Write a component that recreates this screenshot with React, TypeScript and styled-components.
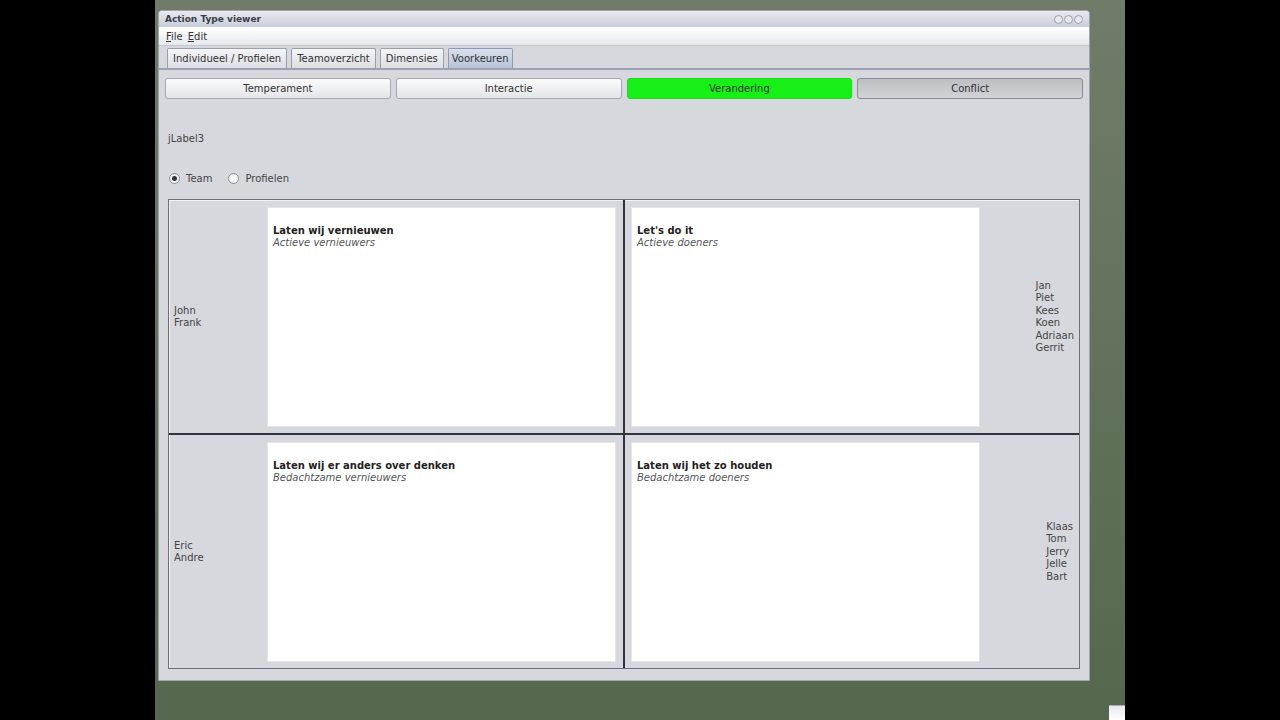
import React from 'react';
import styled, { createGlobalStyle } from 'styled-components';

const GlobalStyle = createGlobalStyle`
  html, body { margin: 0; padding: 0; background: #000; }
  body { font-family: "DejaVu Sans", "Liberation Sans", sans-serif; font-size: 10px; color: #222; }
`;

const Screen = styled.div`
  width: 1280px;
  height: 720px;
  display: flex;
  overflow: hidden;
`;

const SideBar = styled.div`
  width: 155px;
  background: #000;
  flex-shrink: 0;
`;

const Desktop = styled.div`
  width: 970px;
  height: 720px;
  background: linear-gradient(#6f7c69, #55684f);
  padding: 10px 0 0 3px;
  box-sizing: border-box;
  position: relative;
`;

const Window = styled.div`
  width: 932px;
  height: 671px;
  background: #d6d8de;
  border: 1px solid #a0a4ac;
  border-radius: 4px 4px 0 0;
  box-sizing: border-box;
  display: flex;
  flex-direction: column;
`;

const TitleBar = styled.div`
  height: 16px;
  display: flex;
  align-items: center;
  justify-content: space-between;
  padding: 0 6px;
  background: linear-gradient(#e8eaf0, #c9cdd7);
  border-radius: 3px 3px 0 0;
`;

const Title = styled.span`
  font-weight: bold;
  font-size: 9px;
  color: #3a3e48;
`;

const WinButtons = styled.div`
  display: flex;
  gap: 1px;
`;

const WinButton = styled.span`
  width: 7px;
  height: 7px;
  border-radius: 50%;
  border: 1px solid #9ca0aa;
  background: #e6e8ec;
`;

const MenuBar = styled.div`
  height: 18px;
  display: flex;
  align-items: center;
  gap: 5px;
  padding: 0 7px;
  background: linear-gradient(#ffffff, #e6e8ec);
  border-bottom: 1px solid #c4c8d0;
`;

const MenuItem = styled.span`
  color: #333;
  u { text-decoration: underline; }
`;

const TabStrip = styled.div`
  height: 24px;
  display: flex;
  align-items: flex-end;
  gap: 4px;
  padding: 0 8px;
  border-bottom: 2px solid #9aa2b4;
  box-sizing: border-box;
`;

const Tab = styled.div<{ $active?: boolean }>`
  height: 19px;
  padding: 0 ${p => (p.$active ? 3 : 5)}px;
  display: flex;
  align-items: center;
  border: 1px solid ${p => (p.$active ? '#8d9ab0' : '#9a9ea8')};
  border-bottom: none;
  border-radius: 2px 2px 0 0;
  background: ${p => (p.$active ? 'linear-gradient(#d8e0ec, #b7c3d6)' : 'linear-gradient(#f4f5f7, #dcdee3)')};
  color: #333;
`;

const Content = styled.div`
  flex: 1;
  padding: 8px 6px 0 6px;
  display: flex;
  flex-direction: column;
`;

const ButtonRow = styled.div`
  display: grid;
  grid-template-columns: repeat(4, 1fr);
  gap: 5px;
`;

const ToggleButton = styled.div<{ $state?: 'on' | 'pressed' }>`
  height: 19px;
  display: flex;
  align-items: center;
  justify-content: center;
  border-radius: 3px;
  border: 1px solid ${p => (p.$state === 'on' ? '#20d820' : p.$state === 'pressed' ? '#8a8c90' : '#a6a8ae')};
  background: ${p =>
    p.$state === 'on'
      ? '#16f016'
      : p.$state === 'pressed'
      ? 'linear-gradient(#bdbfc3, #d2d3d6)'
      : 'linear-gradient(#fbfbfc, #e4e5e8)'};
  color: #333;
`;

const Label = styled.div`
  margin: 34px 0 0 3px;
  color: #444;
  height: 12px;
`;

const RadioRow = styled.div`
  display: flex;
  align-items: center;
  gap: 16px;
  margin: 28px 0 0 4px;
`;

const Radio = styled.label`
  display: flex;
  align-items: center;
  gap: 6px;
  color: #444;
`;

const RadioDot = styled.span<{ $checked?: boolean }>`
  width: 9px;
  height: 9px;
  border-radius: 50%;
  border: 1px solid #8c9098;
  background: radial-gradient(circle, ${p => (p.$checked ? '#333 0 2px' : '#fff 0 2px')}, #f4f4f6 3px);
`;

const Quadrants = styled.div`
  margin: 15px 3px 0 3px;
  height: 470px;
  border: 1px solid #6c6f78;
  box-shadow: inset 1px 1px 0 #f0f1f4;
  display: grid;
  grid-template-columns: 1fr 2px 1fr;
  grid-template-rows: 1fr 2px 1fr;
  box-sizing: border-box;
  background: #d6d8de;
`;

const VLine = styled.div`
  background: #2f323c;
  grid-row: 1 / 4;
  grid-column: 2;
`;

const HLine = styled.div<{ $col: number }>`
  background: #2f323c;
  grid-row: 2;
  grid-column: ${p => p.$col};
`;

const Cell = styled.div<{ $side: 'left' | 'right' }>`
  display: grid;
  grid-template-columns: ${p => (p.$side === 'left' ? '98px 1fr' : '349px 1fr')};
  padding: ${p => (p.$side === 'left' ? '7px 7px 6px 0' : '7px 0 6px 6px')};
  min-height: 0;
`;

const Names = styled.div<{ $side: 'left' | 'right'; $pad?: number }>`
  display: flex;
  flex-direction: column;
  justify-content: center;
  align-items: ${p => (p.$side === 'left' ? 'flex-start' : 'flex-end')};
  padding: ${p => (p.$side === 'left' ? '0 0 0 5px' : `0 ${p.$pad ?? 5}px 0 0`)};
  line-height: 12.5px;
  color: #444;
`;

const NameBlock = styled.div`
  display: flex;
  flex-direction: column;
`;

const Card = styled.div`
  background: #fff;
  border: 1px solid #e2e4e8;
  padding: 17px 5px;
`;

const CardTitle = styled.div`
  font-weight: bold;
  color: #222;
  line-height: 12px;
`;

const CardSub = styled.div`
  font-style: italic;
  color: #555;
  line-height: 12px;
`;

const Corner = styled.div`
  position: absolute;
  right: 0;
  bottom: 0;
  width: 16px;
  height: 14px;
  background: linear-gradient(#e8eaee, #ffffff);
  border-top: 1px solid #aaa;
`;

type Quad = { title: string; sub: string; names: string[] };

const quads: Quad[] = [
  { title: 'Laten wij vernieuwen', sub: 'Actieve vernieuwers', names: ['John', 'Frank'] },
  { title: "Let's do it", sub: 'Actieve doeners', names: ['Jan', 'Piet', 'Kees', 'Koen', 'Adriaan', 'Gerrit'] },
  { title: 'Laten wij er anders over denken', sub: 'Bedachtzame vernieuwers', names: ['Eric', 'Andre'] },
  { title: 'Laten wij het zo houden', sub: 'Bedachtzame doeners', names: ['Klaas', 'Tom', 'Jerry', 'Jelle', 'Bart'] },
];

const renderNames = (q: Quad, side: 'left' | 'right', pad?: number) => (
  <Names $side={side} $pad={pad}>
    <NameBlock>
      {q.names.map(n => (
        <span key={n}>{n}</span>
      ))}
    </NameBlock>
  </Names>
);

const renderCard = (q: Quad) => (
  <Card>
    <CardTitle>{q.title}</CardTitle>
    <CardSub>{q.sub}</CardSub>
  </Card>
);

export default function App() {
  return (
    <Screen>
      <GlobalStyle />
      <SideBar />
      <Desktop>
        <Window>
          <TitleBar>
            <Title>Action Type viewer</Title>
            <WinButtons>
              <WinButton />
              <WinButton />
              <WinButton />
            </WinButtons>
          </TitleBar>
          <MenuBar>
            <MenuItem><u>F</u>ile</MenuItem>
            <MenuItem><u>E</u>dit</MenuItem>
          </MenuBar>
          <TabStrip>
            <Tab>Individueel / Profielen</Tab>
            <Tab>Teamoverzicht</Tab>
            <Tab>Dimensies</Tab>
            <Tab $active>Voorkeuren</Tab>
          </TabStrip>
          <Content>
            <ButtonRow>
              <ToggleButton>Temperament</ToggleButton>
              <ToggleButton>Interactie</ToggleButton>
              <ToggleButton $state="on">Verandering</ToggleButton>
              <ToggleButton $state="pressed">Conflict</ToggleButton>
            </ButtonRow>
            <Label>jLabel3</Label>
            <RadioRow>
              <Radio><RadioDot $checked />Team</Radio>
              <Radio><RadioDot />Profielen</Radio>
            </RadioRow>
            <Quadrants>
              <Cell $side="left" style={{ gridRow: 1, gridColumn: 1 }}>
                {renderNames(quads[0], 'left')}
                {renderCard(quads[0])}
              </Cell>
              <VLine />
              <Cell $side="right" style={{ gridRow: 1, gridColumn: 3 }}>
                {renderCard(quads[1])}
                {renderNames(quads[1], 'right', 5)}
              </Cell>
              <HLine $col={1} />
              <HLine $col={3} />
              <Cell $side="left" style={{ gridRow: 3, gridColumn: 1 }}>
                {renderNames(quads[2], 'left')}
                {renderCard(quads[2])}
              </Cell>
              <Cell $side="right" style={{ gridRow: 3, gridColumn: 3 }}>
                {renderCard(quads[3])}
                {renderNames(quads[3], 'right', 6)}
              </Cell>
            </Quadrants>
          </Content>
        </Window>
        <Corner />
      </Desktop>
      <SideBar />
    </Screen>
  );
}
